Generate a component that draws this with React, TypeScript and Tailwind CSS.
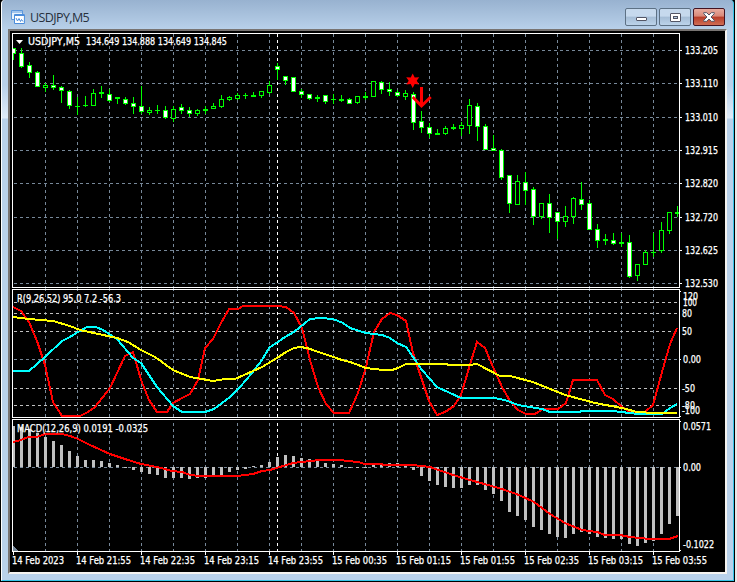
import React from 'react';

const LIME = '#00ff00';
const SLATE = '#778899';
const SILVER = '#c0c0c0';

// high, body top, body bottom, low, kind (0 = down, 1 = up)
const candles: number[][] = [
  [48, 48, 54, 60, 0], [48, 53, 67, 68, 0], [62, 65, 73, 78, 0], [71, 72, 87, 87, 0],
  [83, 85, 88, 92, 1], [75, 85, 88, 90, 0], [86, 87, 91, 103, 0], [90, 91, 106, 109, 0],
  [97, 106, 107, 115, 1], [96, 105, 106, 107, 1], [89, 93, 106, 106, 1], [86, 92, 94, 98, 1],
  [89, 94, 101, 102, 0], [97, 97, 99, 104, 1], [97, 99, 104, 105, 0], [97, 103, 107, 114, 0],
  [86, 106, 112, 114, 0], [107, 110, 113, 115, 1], [105, 110, 111, 114, 1], [106, 110, 118, 119, 0],
  [106, 109, 119, 122, 1], [104, 107, 111, 114, 0], [107, 110, 114, 117, 0], [109, 110, 114, 116, 1],
  [106, 109, 111, 114, 1], [103, 106, 109, 109, 1], [95, 99, 107, 108, 1], [96, 97, 100, 101, 1],
  [93, 95, 99, 100, 1], [93, 95, 96, 99, 1], [92, 95, 97, 97, 1], [91, 91, 96, 98, 1],
  [81, 85, 93, 94, 1], [63, 66, 70, 80, 0], [76, 76, 81, 85, 0], [77, 77, 92, 92, 0],
  [89, 91, 95, 98, 0], [94, 94, 99, 100, 0], [95, 97, 99, 102, 1], [95, 95, 102, 104, 0],
  [94, 99, 100, 104, 1], [95, 99, 101, 102, 1], [98, 99, 104, 104, 0], [96, 96, 103, 104, 1],
  [92, 96, 98, 100, 1], [81, 81, 97, 97, 1], [81, 82, 90, 94, 0], [82, 89, 92, 96, 0],
  [90, 92, 96, 97, 0], [90, 93, 97, 100, 1], [92, 94, 123, 130, 0], [111, 121, 128, 133, 0],
  [123, 127, 134, 138, 0], [129, 133, 135, 135, 1], [126, 128, 134, 135, 1], [124, 127, 129, 130, 1],
  [122, 125, 129, 136, 1], [99, 105, 126, 134, 1], [103, 106, 127, 141, 0], [124, 126, 150, 150, 0],
  [135, 148, 151, 151, 0], [149, 150, 178, 180, 0], [175, 175, 204, 213, 0], [175, 181, 205, 205, 1],
  [172, 182, 191, 205, 0], [187, 189, 217, 225, 0], [203, 203, 217, 219, 1], [194, 203, 218, 233, 0],
  [212, 212, 222, 239, 0], [206, 216, 222, 227, 1], [197, 198, 217, 224, 1], [182, 199, 205, 210, 0],
  [200, 203, 230, 230, 0], [224, 229, 241, 248, 0], [234, 239, 241, 245, 1], [233, 240, 244, 245, 0],
  [233, 242, 244, 247, 1], [235, 242, 277, 278, 0], [264, 264, 276, 281, 1], [250, 252, 265, 265, 1],
  [233, 252, 253, 257, 1], [222, 230, 251, 253, 1], [212, 212, 231, 234, 1], [206, 212, 214, 217, 1],
];

// far end of every histogram bar; the near end is the zero line
const ZERO = 467;
const macd = [
  426, 427, 429, 433, 437, 441, 445, 451, 456, 460, 460, 461, 463, 465, 468, 470, 472, 474, 475, 478, 478,
  478, 479, 478, 478, 475, 475, 472, 470, 469, 466, 465, 462, 457, 455, 456, 458, 459, 461, 463, 464, 465,
  468, 468, 468, 465, 463, 463, 463, 465, 470, 476, 481, 485, 487, 488, 488, 485, 485, 490, 494, 501, 512,
  516, 520, 527, 530, 534, 537, 538, 534, 532, 534, 537, 538, 539, 539, 544, 546, 543, 541, 534, 524, 516,
];

const rciShort =
  '13,307 21,311 29,322 37,341 45,365 53,402 62,416 80,416 88,412 95,407 110,388 125,356 133,352 136,362 141,380 149,400 157,412 167,412 173,403 182,398 190,394 198,380 205,348 213,339 221,323 229,309 238,309 243,306 278,306 286,307 294,313 302,328 310,360 318,387 326,404 334,413 349,413 358,393 366,367 374,332 382,319 390,313 397,315 406,321 413,353 422,380 429,401 437,415 445,412 454,406 461,395 469,368 477,342 485,348 493,367 502,387 510,401 518,410 526,414 535,414 543,409 558,409 566,403 573,380 597,380 605,395 613,399 622,407 630,412 637,414 645,412 653,405 662,372 670,344 677,328';
const rciMid =
  '13,371 29,371 45,357 62,341 70,337 78,332 87,327 96,327 103,330 117,339 133,358 141,363 157,387 173,406 182,412 205,412 214,409 230,397 240,387 252,373 262,360 269,348 285,337 294,332 310,319 320,318 333,319 343,323 350,328 366,333 382,335 390,338 397,343 406,347 422,370 437,387 461,398 478,398 494,398 505,400 518,405 542,409 550,412 578,412 583,411 613,411 638,414 662,414 670,408 677,404';
const rciLong =
  '13,317 29,319 53,321 70,326 80,330 117,338 128,342 141,350 155,357 173,370 190,377 213,381 225,379 235,379 253,371 262,367 277,358 286,352 294,348 300,347 307,348 342,360 350,362 366,368 383,370 392,370 398,368 406,364 445,364 450,365 469,365 477,364 500,376 510,376 533,382 565,395 595,403 622,408 637,412 655,413 677,413';
const macdSignal =
  '13,442 21,440 28,437 37,437 45,434 62,434 70,436 78,439 90,445 110,454 125,459 141,464 157,467 172,471 182,472 190,475 200,476 237,476 253,474 262,471 270,470 280,467 293,463 310,461 320,460 340,460 348,461 358,462 365,464 380,464 385,465 413,465 430,467 453,475 470,480 488,485 502,489 519,495 534,502 550,514 565,523 582,530 597,532 605,535 620,535 630,537 650,539 669,539 678,536';

const priceLevels: [string, number][] = [
  ['133.205', 50], ['133.110', 83], ['133.010', 117], ['132.915', 150],
  ['132.820', 183], ['132.720', 217], ['132.625', 250], ['132.530', 283],
];

const lowerLabels: [string, number, number, number][] = [
  ['120', 683, 300, 15], ['100', 683, 306, 14], ['80', 682, 317, 10], ['50', 682, 335, 10],
  ['0.00', 683, 363, 18], ['-50', 682, 392, 13], ['-80', 682, 409, 13], ['-100', 682, 414, 18],
  ['0.0571', 683, 430, 28], ['0.00', 683, 471, 18], ['-0.1022', 683, 548, 31],
];

const times = [
  '14 Feb 2023', '14 Feb 21:55', '14 Feb 22:35', '14 Feb 23:15', '14 Feb 23:55', '15 Feb 00:35',
  '15 Feb 01:15', '15 Feb 01:55', '15 Feb 02:35', '15 Feb 03:15', '15 Feb 03:55',
];

const gridX = Array.from({ length: 20 }, (_, i) => 45 + i * 32);

interface LabelProps {
  x: number;
  y: number;
  w: number;
  children: string;
}

const Label: React.FC<LabelProps> = ({ x, y, w, children }) => (
  <text x={x} y={y} textLength={w} lengthAdjust="spacingAndGlyphs" fill="#fff" stroke="#fff" strokeWidth="0.25">
    {children}
  </text>
);

const HLine = ({ y, color }: { y: number; color: string }) => (
  <line x1="14" x2="679" y1={y + 0.5} y2={y + 0.5} stroke={color} strokeDasharray="3 3" />
);

const VGrid = ({ top, bottom }: { top: number; bottom: number }) => (
  <g strokeDasharray="3 3">
    {gridX.map(x => (
      <line key={x} x1={x + 0.5} x2={x + 0.5} y1={top} y2={bottom} stroke={SLATE} />
    ))}
    <line x1="277.5" x2="277.5" y1={top} y2={bottom} stroke="#fff" />
  </g>
);

const Candle = ({ x, data }: { x: number; data: number[] }) => {
  const [high, top, bottom, low, up] = data;
  return (
    <g>
      <rect x={x} y={high} width="1" height={Math.max(low - high, 1)} fill={LIME} />
      <rect x={x - 2} y={top} width="5" height={bottom - top} fill={LIME} />
      {bottom - top > 2 && (
        <rect x={x - 1} y={top + 1} width="3" height={bottom - top - 2} fill={up ? '#000' : '#fff'} />
      )}
    </g>
  );
};

const Chart = () => (
  <svg
    width="715"
    height="541"
    viewBox="10 31 715 541"
    shapeRendering="crispEdges"
    className="block bg-black text-[10px] [font-family:'DejaVu_Sans_Condensed','DejaVu_Sans',sans-serif]"
  >
    <defs>
      <clipPath id="plot">
        <rect x="13" y="34" width="666" height="517" />
      </clipPath>
    </defs>

    <VGrid top={34} bottom={287} />
    <VGrid top={288} bottom={417} />
    <VGrid top={423} bottom={551} />
    {priceLevels.map(([, y]) => <HLine key={y} y={y} color={SLATE} />)}
    {[302, 313, 331, 388, 405].map(y => <HLine key={y} y={y} color={SILVER} />)}
    <HLine y={359} color={SLATE} />
    <HLine y={467} color={SLATE} />

    <g clipPath="url(#plot)">
      {candles.map((c, i) => <Candle key={i} x={13 + i * 8} data={c} />)}
      {macd.map((v, i) => (
        <rect key={i} x={12 + i * 8} y={Math.min(v, ZERO)} width="3" height={Math.abs(v - ZERO)} fill={SILVER} />
      ))}
      <g fill="none" strokeWidth="2">
        <polyline points={rciShort} stroke="#ff0000" />
        <polyline points={rciMid} stroke="#00ffff" />
        <polyline points={rciLong} stroke="#ffff00" />
        <polyline points={macdSignal} stroke="#ff0000" />
      </g>
    </g>

    {/* sell signal */}
    <g shapeRendering="auto">
      <path d="M412.7 73.5l2 4.1 4.5-.4-2.5 3.6 2.5 3.6-4.5-.5-2 4-2-4-4.5.5 2.5-3.6-2.5-3.6 4.5.4z" fill="#f00" />
      <path d="M421.5 87v19M412.7 97l8.8 9 9.2-9" stroke="#f00" strokeWidth="3" fill="none" />
    </g>

    {/* pane frames */}
    <g fill="none" stroke="#fff">
      <rect x="12.5" y="33.5" width="667" height="254" />
      <rect x="12.5" y="289.5" width="667" height="128" />
      <rect x="12.5" y="419.5" width="667" height="132" />
    </g>
    <path d="M13 546l5 5h-5z" fill={SLATE} />
    <path d="M16 40h7l-3.5 4z" fill="#fff" shapeRendering="auto" />

    <g fill="#fff">
      {priceLevels.map(([, y]) => <rect key={y} x="680" y={y} width="2" height="1" />)}
      {[291, 359, 416, 421, 467, 550].map(y => <rect key={y} x="680" y={y} width="1" height="1" />)}
      {times.map((t, i) => <rect key={t} x={13 + i * 64} y="552" width="1" height="3" />)}
    </g>

    <Label x={28} y={45} w={52}>USDJPY,M5</Label>
    <Label x={86} y={45} w={141}>134.649 134.888 134.649 134.845</Label>
    <Label x={17} y={302} w={104}>R(9,26,52) 95.0 7.2 -56.3</Label>
    <Label x={17} y={432} w={131}>MACD(12,26,9) 0.0191 -0.0325</Label>
    {priceLevels.map(([text, y]) => <Label key={text} x={685} y={y + 4} w={33}>{text}</Label>)}
    {lowerLabels.map(([text, x, y, w]) => <Label key={y} x={x} y={y} w={w}>{text}</Label>)}
    {times.map((t, i) => <Label key={t} x={12 + i * 64} y={564} w={i === 0 ? 52 : 55}>{t}</Label>)}
  </svg>
);

const ChartIcon = () => (
  <svg width="14" height="14" viewBox="0 0 14 14" fill="none">
    <path d="M.5 .5h11v9h-11z" fill="#e8f2fc" stroke="#5b97dc" />
    <path d="M1 2h10" stroke="#5b97dc" />
    <path d="M3.5 4.5h9.9v9h-9.9z" fill="#fff" stroke="#4a8cdb" />
    <path d="M3.5 5.5h10" stroke="#4a8cdb" />
    <path d="M5 8l1.5 3L8 8.5l1.5 3 1-2 1.5 2" stroke="#4a8cdb" />
  </svg>
);

const buttonBase = 'w-8 h-[18px] rounded-[2px] border flex items-center justify-center';

export default function App() {
  return (
    <div className="w-[737px] h-[582px] bg-black flex overflow-hidden pl-px pb-px border-r-2 border-r-[#e8e8e8]">
      <div className="w-[733px] mr-px flex flex-col border-l border-l-white border-r border-r-[#35c5e8] border-b border-b-[#35c5e8] rounded-t-[4px] bg-[#b9d1ea] bg-[linear-gradient(to_bottom,#98b2d0_0,#b9d1ea_30px,#b9d1ea_85px,#dfebf8_118px,#b9d1ea_119px)]">
        <header className="h-[29px] shrink-0 flex items-start pr-2">
          <div className="pl-[9px] pt-[10px]">
            <ChartIcon />
          </div>
          <h1 className="ml-[5px] mt-[9px] text-[12.5px] leading-[17px] tracking-[-0.6px] text-[#26303c] [font-family:'Open_Sans',sans-serif]">
            USDJPY,M5
          </h1>
          <div className="ml-auto mt-2 flex gap-[2px]">
            <button className={`${buttonBase} border-[#5d7185] bg-[linear-gradient(to_bottom,#c6d9ed_45%,#a5bdd6_50%,#bcd3ea)]`}>
              <span className="w-[11px] h-1 mt-[3px] bg-white border border-[#535666] rounded-[1px]" />
            </button>
            <button className={`${buttonBase} border-[#5d7185] bg-[linear-gradient(to_bottom,#c6d9ed_45%,#a5bdd6_50%,#bcd3ea)]`}>
              <span className="w-[11px] h-[9px] bg-white border border-[#535666] rounded-[1px] flex items-center justify-center">
                <span className="w-[5px] h-[3px] border border-[#535666] bg-[#b5cbe2]" />
              </span>
            </button>
            <button className={`${buttonBase} border-[#431422] bg-[linear-gradient(to_bottom,#e8aca0_0%,#d98878_45%,#b83c28_50%,#cf6d54)]`}>
              <svg width="12" height="10" viewBox="0 0 12 10">
                <path
                  d="M.7.7h3L6 3 8.3.7h3v1L8 5l3.3 3.3v1h-3L6 7 3.7 9.3h-3v-1L4 5 .7 1.7z"
                  fill="#fff"
                  stroke="#535666"
                />
              </svg>
            </button>
          </div>
        </header>
        <main className="ml-[6px] mr-[5px] self-start border-t-2 border-l-2 border-t-[#787472] border-l-[#787472] border-r-2 border-r-[#f5f3f0] border-b-2 border-b-[#f5f3f0]">
          <Chart />
        </main>
      </div>
    </div>
  );
}
